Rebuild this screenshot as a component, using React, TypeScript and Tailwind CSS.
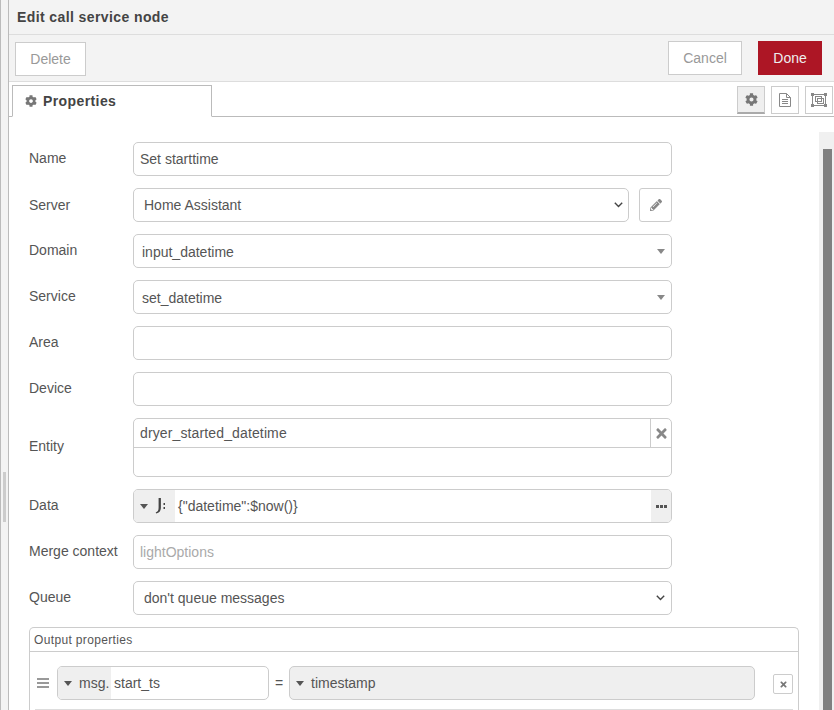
import React from 'react';
import { FaCog, FaPencilAlt, FaTimes } from 'react-icons/fa';

const inputClass =
  'h-[34px] rounded-[5px] border border-[#ccc] bg-white px-[10px] text-[14px] leading-[32px] text-[#555]';

const Caret = ({ className = '' }: { className?: string }) => (
  <svg width="8" height="5" viewBox="0 0 8 5" className={`shrink-0 ${className}`}>
    <path d="M0 0h8L4 5z" fill="currentColor" />
  </svg>
);

const Chevron = () => (
  <svg width="9" height="6" viewBox="0 0 9 6" className="text-[#444]">
    <path d="M.8.8 4.5 4.5 8.2.8" fill="none" stroke="currentColor" strokeWidth="1.4" />
  </svg>
);

const Row = ({
  label,
  children,
  className = 'h-[34px]',
  labelClass = '-translate-y-[1px]',
}: {
  label: string;
  children: React.ReactNode;
  className?: string;
  labelClass?: string;
}) => (
  <div className={`flex items-center ${className}`}>
    <label className={`w-[104px] shrink-0 text-[14px] text-[#555] ${labelClass}`}>{label}</label>
    {children}
  </div>
);

const TabButton = ({ children, active }: { children: React.ReactNode; active?: boolean }) => (
  <div
    className={`flex h-[28px] w-[28px] items-center justify-center border border-[#ccc] text-[#777] ${
      active ? 'border-b-2 border-b-[#aaa] bg-[#efefef]' : 'bg-white'
    }`}
  >
    {children}
  </div>
);

export default function App() {
  return (
    <div className="flex h-[710px] w-[834px] overflow-hidden bg-white font-['Liberation_Sans',Arial,sans-serif]">
      <div className="relative w-[9px] shrink-0 border-x border-[#bbb] bg-[#f3f3f3]">
        <div className="absolute left-[2px] top-[472px] h-[50px] w-[3px] bg-[#ccc]" />
      </div>
      <div className="flex min-w-0 flex-1 flex-col">
        <div className="flex h-[35px] shrink-0 items-center border-b border-[#ddd] bg-[#f3f3f3] pl-[8px] text-[14px] font-bold tracking-[0.4px] text-[#444]">
          Edit call service node
        </div>
        <div className="flex h-[47px] shrink-0 items-center justify-between border-b border-[#ddd] bg-[#f3f3f3] pl-[6px] pr-[12px]">
          <button className="mt-[2px] h-[34px] w-[71px] border border-[#ccc] bg-white text-[14px] text-[#999]">Delete</button>
          <div className="flex gap-[16px]">
            <button className="h-[34px] w-[74px] border border-[#ccc] bg-white text-[14px] text-[#999]">Cancel</button>
            <button className="h-[34px] w-[64px] bg-[#ad1625] text-[14px] text-[#eee]">Done</button>
          </div>
        </div>
        <div className="relative flex h-[35px] shrink-0 items-end justify-between border-b border-[#bbb] pl-[3px] pr-[1px]">
          <div className="-mb-px flex h-[32px] w-[200px] items-center gap-[6px] border border-b-white border-[#bbb] bg-white pl-[12px] text-[14px] font-bold tracking-[0.4px] text-[#444]">
            <FaCog className="text-[12px] text-[#777]" />
            Properties
          </div>
          <div className="mb-[2px] flex gap-[6px]">
            <TabButton active>
              <FaCog className="text-[13px]" />
            </TabButton>
            <TabButton>
              <svg width="12" height="14" viewBox="0 0 12 14" fill="none" stroke="#888">
                <path d="M.5.5h7l4 4v9H.5zM7.5.5v4h4" />
                <path d="M3 6.5h6M3 8.5h6M3 10.5h6" />
              </svg>
            </TabButton>
            <TabButton>
              <svg width="16" height="14" viewBox="0 0 16 14" fill="none" stroke="#888">
                <rect x="1.5" y="1.5" width="13" height="11" />
                <rect x="4.5" y="3.5" width="6" height="5" />
                <rect x="6.5" y="5.5" width="6" height="5" />
                <rect x="0.5" y="0.5" width="2" height="2" fill="#888" />
                <rect x="13.5" y="0.5" width="2" height="2" fill="#888" />
                <rect x="0.5" y="11.5" width="2" height="2" fill="#888" />
                <rect x="13.5" y="11.5" width="2" height="2" fill="#888" />
              </svg>
            </TabButton>
          </div>
        </div>
        <div className="flex min-h-0 flex-1">
          <div className="flex min-w-0 flex-1 flex-col gap-[12px] overflow-hidden pl-[20px] pt-[25px]">
            <Row label="Name">
              <div className={`${inputClass} w-[539px] !px-[6px]`}>Set starttime</div>
            </Row>
            <Row label="Server" labelClass="">
              <div className={`${inputClass} flex w-[496px] items-center justify-between !pr-[5px]`}>
                Home Assistant
                <Chevron />
              </div>
              <div className="ml-[10px] flex h-[34px] w-[33px] items-center justify-center rounded-[3px] border border-[#ccc] text-[#888]">
                <FaPencilAlt className="text-[12px]" />
              </div>
            </Row>
            <Row label="Domain">
              <div className={`${inputClass} flex w-[539px] items-center justify-between !pl-[8px] !pr-[6px]`}>
                <span className="translate-y-[1px]">input_datetime</span>
                <Caret className="text-[#888]" />
              </div>
            </Row>
            <Row label="Service">
              <div className={`${inputClass} flex w-[539px] items-center justify-between !pl-[8px] !pr-[6px]`}>
                <span className="translate-y-[1px]">set_datetime</span>
                <Caret className="text-[#888]" />
              </div>
            </Row>
            <Row label="Area">
              <div className={`${inputClass} w-[539px]`} />
            </Row>
            <Row label="Device">
              <div className={`${inputClass} w-[539px]`} />
            </Row>
            <Row label="Entity" className="h-[59px]">
              <div className="flex h-[59px] w-[539px] flex-col rounded-[5px] border border-[#ccc] text-[14px] text-[#555]">
                <div className="flex h-[29px] items-center justify-between border-b border-[#ccc]">
                  <span className="pl-[6px] tracking-[0.13px]">dryer_started_datetime</span>
                  <div className="flex h-full w-[21px] items-center justify-center border-l border-[#ccc] text-[#888]">
                    <FaTimes className="text-[15px]" />
                  </div>
                </div>
              </div>
            </Row>
            <Row label="Data">
              <div className="flex h-[34px] w-[539px] items-center overflow-hidden rounded-[5px] border border-[#ccc] text-[14px] text-[#555]">
                <div className="flex h-full w-[41px] items-center gap-[7px] bg-[#efefef] pl-[6px] text-[#555]">
                  <Caret />
                  <svg width="11" height="18" viewBox="0 0 11 18" className="text-[#444]">
                    <path d="M3.6 1h2.3v9.5c0 3.4-1.5 5.3-4.7 6L.7 15.4c2-.7 2.9-2 2.9-4.8z" fill="currentColor" />
                    <rect x="8.5" y="6" width="1.5" height="2" fill="currentColor" />
                    <rect x="8.5" y="10" width="1.5" height="2" fill="currentColor" />
                  </svg>
                </div>
                <span className="flex-1 pl-[3px]">{'{"datetime":$now()}'}</span>
                <div className="flex h-full w-[20px] items-center justify-center gap-[1px] bg-[#efefef]">
                  <span className="h-[3px] w-[3px] bg-[#555]" />
                  <span className="h-[3px] w-[3px] bg-[#555]" />
                  <span className="h-[3px] w-[3px] bg-[#555]" />
                </div>
              </div>
            </Row>
            <Row label="Merge context">
              <div className={`${inputClass} w-[539px] !px-[6px] text-[#aaa]`}>lightOptions</div>
            </Row>
            <Row label="Queue">
              <div className={`${inputClass} flex w-[539px] items-center justify-between !pr-[6px]`}>
                don't queue messages
                <Chevron />
              </div>
            </Row>
            <div className="w-[770px] rounded-t-[5px] border border-b-0 border-[#ccc]">
              <div className="flex h-[24px] items-center border-b border-[#ccc] pl-[4px] text-[12px] tracking-[0.35px] text-[#555]">
                Output properties
              </div>
              <div className="flex items-start pl-[7px] pt-[14px]">
                <div className="flex h-[34px] w-[20px] flex-col justify-center gap-[2px]">
                  <span className="h-[2px] w-[12px] bg-[#999]" />
                  <span className="h-[2px] w-[12px] bg-[#999]" />
                  <span className="h-[2px] w-[12px] bg-[#999]" />
                </div>
                <div className="flex h-[34px] w-[212px] items-center overflow-hidden rounded-[5px] border border-[#ccc] text-[14px] text-[#555]">
                  <div className="flex h-full w-[53px] items-center gap-[7px] bg-[#efefef] pl-[6px]">
                    <Caret />
                    msg.
                  </div>
                  <span className="pl-[3px]">start_ts</span>
                </div>
                <span className="flex h-[34px] w-[20px] items-center justify-center text-[14px] text-[#555]">=</span>
                <div className="flex h-[34px] w-[466px] items-center gap-[7px] rounded-[5px] border border-[#ccc] bg-[#efefef] pl-[6px] text-[14px] text-[#555]">
                  <Caret />
                  timestamp
                </div>
                <div className="ml-[18px] mt-[8px] flex h-[20px] w-[20px] items-center justify-center rounded-[2px] border border-[#ccc] text-[#777]">
                  <FaTimes className="text-[9px]" />
                </div>
              </div>
              <div className="ml-[5px] mr-[5px] mt-[9px] border-t border-[#ddd]" />
            </div>
          </div>
          <div className="mt-[15px] w-[15px] shrink-0 bg-[#f0f0f0] pl-[4px] pt-[17px]">
            <div className="h-full w-[9px] bg-[#808080]" />
          </div>
        </div>
      </div>
    </div>
  );
}
